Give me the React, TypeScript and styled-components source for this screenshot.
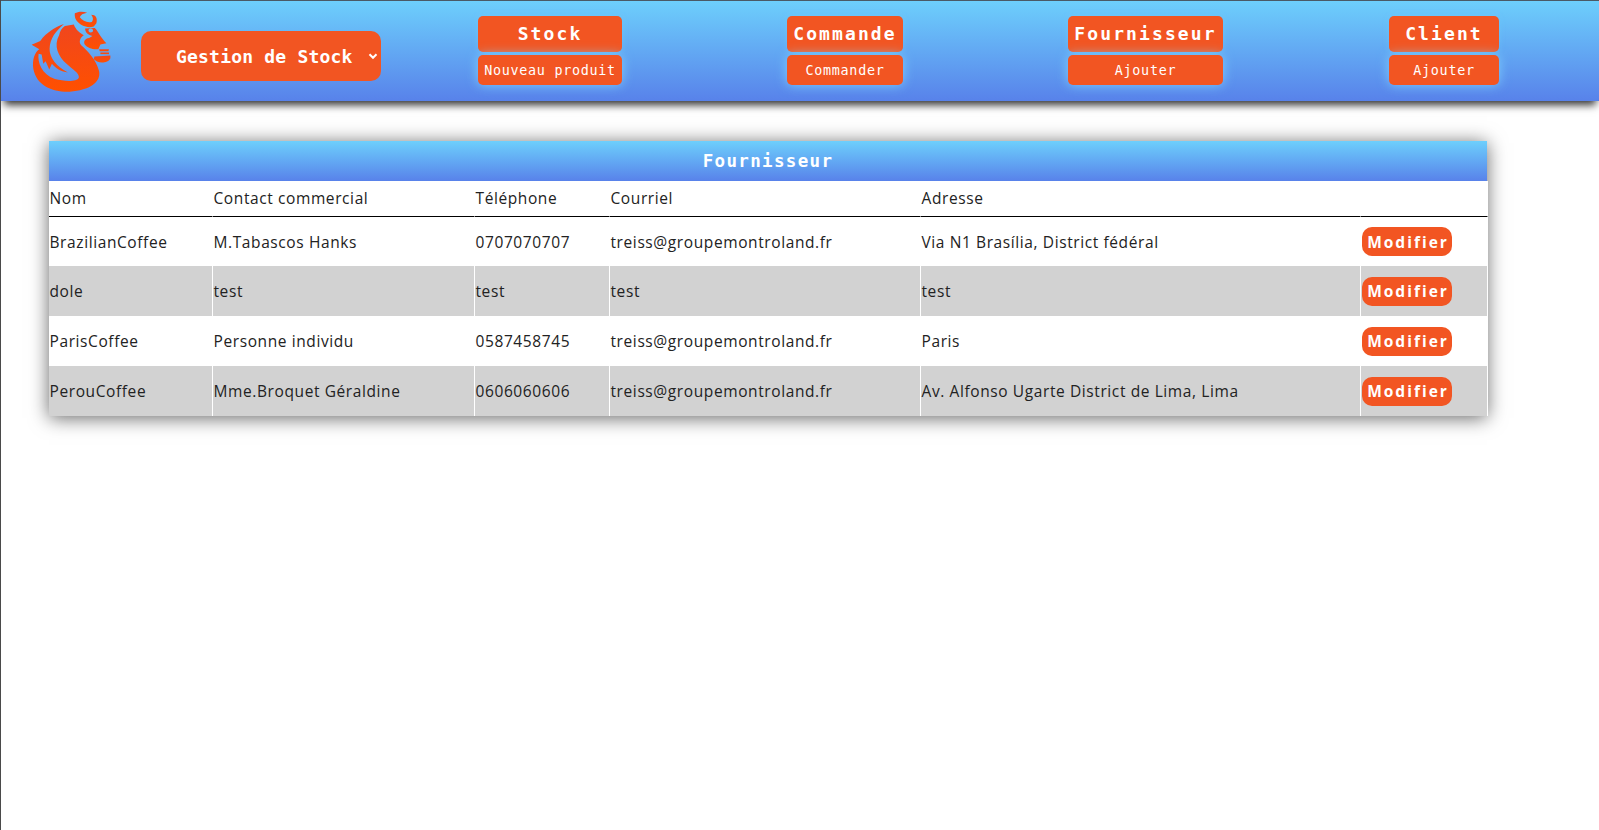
import styled, { createGlobalStyle } from "styled-components";

const Global = createGlobalStyle`
  html, body {
    margin: 0;
    padding: 0;
    background: #fff;
  }
  body {
    min-height: 830px;
    border-left: 1px solid #4a4a4a;
    box-sizing: border-box;
    font-family: "Open Sans", "Noto Sans", sans-serif;
    overflow: hidden;
  }
`;

const Nav = styled.nav`
  height: 101px;
  box-sizing: border-box;
  border-top: 1px solid #4a5a66;
  background: linear-gradient(#6dcffc, #5882ea);
  box-shadow: 0 7px 8px -3px rgba(0, 0, 0, 0.8);
  display: flex;
  align-items: flex-start;
  position: relative;
`;

const Logo = styled.svg`
  width: 83px;
  height: 83px;
  margin: 9px 0 0 29px;
  flex: none;
`;

const Select = styled.div`
  width: 240px;
  height: 50px;
  margin: 30px 0 0 28px;
  padding: 0 3px 0 35px;
  box-sizing: border-box;
  flex: none;
  background: #f25522;
  border-radius: 10px;
  color: #fff;
  display: flex;
  align-items: center;
  justify-content: space-between;
  font: 700 18px "DejaVu Sans Mono", monospace;
  letter-spacing: 0.2px;
`;

const Menus = styled.div`
  flex: 1;
  display: flex;
`;

const Menu = styled.div<{ $left: number; $width: number }>`
  margin-left: ${(p) => p.$left}px;
  width: ${(p) => p.$width}px;
  display: flex;
  flex-direction: column;
  gap: 3px;
  margin-top: 15px;
`;

const MenuButton = styled.a`
  height: 36px;
  padding-bottom: 2px;
  box-sizing: border-box;
  background: #f25522;
  border-radius: 5px;
  color: #fff;
  display: flex;
  align-items: center;
  justify-content: center;
  font: 700 18px "DejaVu Sans Mono", monospace;
  letter-spacing: 2.1px;
  white-space: nowrap;
  box-shadow: 0 0 6px rgba(109, 207, 252, 0.45);
`;

const SubButton = styled(MenuButton)`
  height: 30px;
  padding-bottom: 0;
  font: 400 13.4px "DejaVu Sans Mono", monospace;
  letter-spacing: 0.7px;
  box-shadow: 0 0 12px rgba(130, 215, 255, 0.85);
`;

const Panel = styled.section`
  width: 1438px;
  margin: 40px 0 0 48px;
  box-shadow: 0 2px 18px rgba(0, 0, 0, 0.6);
  position: relative;
`;

const Title = styled.h2`
  margin: 0;
  height: 40px;
  background: linear-gradient(#6dcffc, #5882ea);
  color: #fff;
  display: flex;
  align-items: center;
  justify-content: center;
  font: 700 17.5px "DejaVu Sans Mono", monospace;
  letter-spacing: 1.35px;
`;

const Table = styled.table`
  width: 1439px;
  table-layout: fixed;
  border-collapse: separate;
  border-spacing: 0;
  font-size: 15.5px;
  letter-spacing: 0.6px;
  color: #222;
`;

const Th = styled.th<{ $width?: number }>`
  width: ${(p) => (p.$width ? `${p.$width}px` : "auto")};
  height: 36px;
  padding: 0 0 1px 0.5px;
  box-sizing: border-box;
  font-weight: 400;
  text-align: left;
  background: #fff;
  border-right: 1px solid #fff;
  border-bottom: 1px solid #000;
`;

const Row = styled.tr<{ $alt: boolean }>`
  background: ${(p) => (p.$alt ? "#d2d2d2" : "#fff")};
  height: 50px;
  &:first-child {
    height: 49px;
  }
`;

const Td = styled.td`
  padding: 0 0 0 0.5px;
  border-right: 1px solid #fff;
  white-space: nowrap;
`;

const Edit = styled.button`
  width: 90px;
  height: 29px;
  padding: 0 0 0 3px;
  display: block;
  border: none;
  border-radius: 10px;
  background: #f25522;
  color: #fff;
  font: 700 15.5px "Open Sans", sans-serif;
  letter-spacing: 2px;
`;

const menus = [
  { main: "Stock", sub: "Nouveau produit", left: 97, width: 144 },
  { main: "Commande", sub: "Commander", left: 165, width: 116 },
  { main: "Fournisseur", sub: "Ajouter", left: 165, width: 155 },
  { main: "Client", sub: "Ajouter", left: 166, width: 110 },
];

const columns = [
  { label: "Nom", width: 164 },
  { label: "Contact commercial", width: 262 },
  { label: "Téléphone", width: 135 },
  { label: "Courriel", width: 311 },
  { label: "Adresse", width: 440 },
  { label: "", width: 127 },
];

const suppliers = [
  ["BrazilianCoffee", "M.Tabascos Hanks", "0707070707", "treiss@groupemontroland.fr", "Via N1 Brasília, District fédéral"],
  ["dole", "test", "test", "test", "test"],
  ["ParisCoffee", "Personne individu", "0587458745", "treiss@groupemontroland.fr", "Paris"],
  ["PerouCoffee", "Mme.Broquet Géraldine", "0606060606", "treiss@groupemontroland.fr", "Av. Alfonso Ugarte District de Lima, Lima"],
];

function TigerLogo() {
  return (
    <Logo viewBox="90 28 250 250">
      <defs>
        <linearGradient id="tiger" x1="0" y1="0" x2="0" y2="1">
          <stop offset="0" stopColor="#f0461e" />
          <stop offset="1" stopColor="#ff5000" />
        </linearGradient>
      </defs>
      <g fill="url(#tiger)">
        {/* queue + corps */}
        <path d="M95 133 L121 121 C140 95 165 80 192 70 C168 92 150 112 149 145 C148 170 170 200 204 216 C185 214 168 205 156 190 L148 207 L137 182 L130 190 L125 162 L116 160 C112 185 125 222 165 236 C195 244 232 244 237 232 C240 218 218 208 200 190 C175 168 160 135 178 103 C180 92 186 82 195 76 L222 72 C228 88 240 98 252 104 C240 112 236 125 245 135 C262 150 290 178 298 212 C305 245 270 270 210 274 C160 276 110 258 100 205 C96 178 104 155 118 146 Z" />
        {/* tete */}
        <path
          fillRule="evenodd"
          d="M256 84 L285 82 C296 92 302 110 320 128 L302 132 L296 146 C280 148 262 142 255 132 C250 122 256 114 268 112 L278 106 C266 104 256 96 256 84 Z M266 90 A7 6 0 1 0 280 90 A7 6 0 1 0 266 90 Z"
        />
        <path d="M225 38 C235 32 250 32 262 36 C250 38 242 42 240 50 C248 60 262 68 276 64 C282 58 280 48 274 42 C288 42 294 52 290 68 L282 78 C262 84 240 74 230 60 C226 54 224 46 225 38 Z" />
        {/* tasse */}
        <path d="M298 146 L328 146 L326 152 L300 152 Z" />
        <rect x="302" y="156" width="26" height="5" />
        <path d="M284 168 L332 165 L332 173 C326 187 304 189 292 183 L282 176 Z" />
      </g>
    </Logo>
  );
}

export default function App() {
  return (
    <>
      <Global />
      <Nav>
        <TigerLogo />
        <Select>
          Gestion de Stock
          <svg width="10" height="10" viewBox="0 0 10 10" fill="none" stroke="#fff" strokeWidth="2">
            <path d="M1.5 3.2 L5 6.8 L8.5 3.2" />
          </svg>
        </Select>
        <Menus>
          {menus.map((m) => (
            <Menu key={m.main} $left={m.left} $width={m.width}>
              <MenuButton>{m.main}</MenuButton>
              <SubButton>{m.sub}</SubButton>
            </Menu>
          ))}
        </Menus>
      </Nav>
      <Panel>
        <Title>Fournisseur</Title>
        <Table>
          <thead>
            <tr>
              {columns.map((c) => (
                <Th key={c.label} $width={c.width}>
                  {c.label}
                </Th>
              ))}
            </tr>
          </thead>
          <tbody>
            {suppliers.map((s, i) => (
              <Row key={s[0]} $alt={i % 2 === 1}>
                {s.map((value, j) => (
                  <Td key={j}>{value}</Td>
                ))}
                <Td>
                  <Edit>Modifier</Edit>
                </Td>
              </Row>
            ))}
          </tbody>
        </Table>
      </Panel>
    </>
  );
}
